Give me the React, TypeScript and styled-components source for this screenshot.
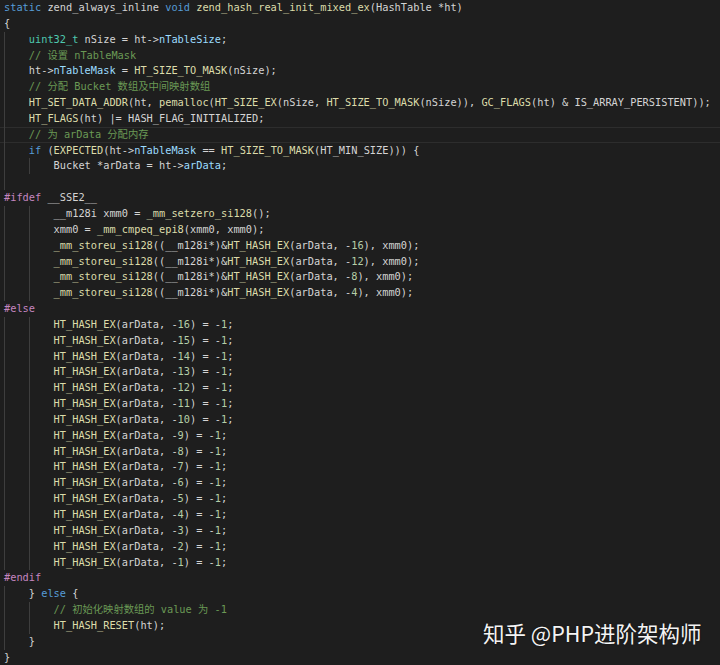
import React from "react";
import styled, { createGlobalStyle } from "styled-components";

const GlobalStyle = createGlobalStyle`
  html, body { margin: 0; padding: 0; background: #1e1e1e; }
`;

type Kind = "plain" | "kw" | "type" | "fn" | "member" | "num" | "comment" | "pp";
type Token = { kind: Kind; text: string };

const COLORS: Record<Kind, string> = {
  plain: "#d4d4d4",
  kw: "#569cd6",
  type: "#4ec9b0",
  fn: "#dcdcaa",
  member: "#9cdcfe",
  num: "#b5cea8",
  comment: "#6a9955",
  pp: "#c586c0",
};

const KEYWORDS = new Set(["static", "void", "if", "else"]);
const TYPES = new Set(["uint32_t"]);

const SOURCE = `static zend_always_inline void zend_hash_real_init_mixed_ex(HashTable *ht)
{
    uint32_t nSize = ht->nTableSize;
    // 设置 nTableMask
    ht->nTableMask = HT_SIZE_TO_MASK(nSize);
    // 分配 Bucket 数组及中间映射数组
    HT_SET_DATA_ADDR(ht, pemalloc(HT_SIZE_EX(nSize, HT_SIZE_TO_MASK(nSize)), GC_FLAGS(ht) & IS_ARRAY_PERSISTENT));
    HT_FLAGS(ht) |= HASH_FLAG_INITIALIZED;
    // 为 arData 分配内存
    if (EXPECTED(ht->nTableMask == HT_SIZE_TO_MASK(HT_MIN_SIZE))) {
        Bucket *arData = ht->arData;

#ifdef __SSE2__
        __m128i xmm0 = _mm_setzero_si128();
        xmm0 = _mm_cmpeq_epi8(xmm0, xmm0);
        _mm_storeu_si128((__m128i*)&HT_HASH_EX(arData, -16), xmm0);
        _mm_storeu_si128((__m128i*)&HT_HASH_EX(arData, -12), xmm0);
        _mm_storeu_si128((__m128i*)&HT_HASH_EX(arData, -8), xmm0);
        _mm_storeu_si128((__m128i*)&HT_HASH_EX(arData, -4), xmm0);
#else
        HT_HASH_EX(arData, -16) = -1;
        HT_HASH_EX(arData, -15) = -1;
        HT_HASH_EX(arData, -14) = -1;
        HT_HASH_EX(arData, -13) = -1;
        HT_HASH_EX(arData, -12) = -1;
        HT_HASH_EX(arData, -11) = -1;
        HT_HASH_EX(arData, -10) = -1;
        HT_HASH_EX(arData, -9) = -1;
        HT_HASH_EX(arData, -8) = -1;
        HT_HASH_EX(arData, -7) = -1;
        HT_HASH_EX(arData, -6) = -1;
        HT_HASH_EX(arData, -5) = -1;
        HT_HASH_EX(arData, -4) = -1;
        HT_HASH_EX(arData, -3) = -1;
        HT_HASH_EX(arData, -2) = -1;
        HT_HASH_EX(arData, -1) = -1;
#endif
    } else {
        // 初始化映射数组的 value 为 -1
        HT_HASH_RESET(ht);
    }
}`;

function tokenize(text: string): Token[] {
  const out: Token[] = [];
  const push = (kind: Kind, t: string) => {
    const last = out[out.length - 1];
    if (last && last.kind === kind && kind === "plain") last.text += t;
    else out.push({ kind, text: t });
  };
  if (text.startsWith("//")) return [{ kind: "comment", text }];
  let rest = text;
  if (text.startsWith("#")) {
    const m = /^#\w+/.exec(text);
    if (m) {
      out.push({ kind: "pp", text: m[0] });
      rest = text.slice(m[0].length);
    }
  }
  const re = /([A-Za-z_]\w*)|(\d+)|(->)|(\s+)|([^\w\s])/g;
  let m: RegExpExecArray | null;
  let prevArrow = false;
  while ((m = re.exec(rest))) {
    const tok = m[0];
    if (m[1]) {
      const after = rest.slice(re.lastIndex);
      let kind: Kind = "plain";
      if (KEYWORDS.has(tok)) kind = "kw";
      else if (TYPES.has(tok)) kind = "type";
      else if (prevArrow) kind = "member";
      else if (/^\s*\(/.test(after)) kind = "fn";
      push(kind, tok);
    } else if (m[2]) {
      push("num", tok);
    } else {
      push("plain", tok);
    }
    prevArrow = tok === "->";
  }
  return out;
}

const LINES = SOURCE.split("\n").map((raw, i) => {
  const spaces = raw.length - raw.trimStart().length;
  const body = raw.trimStart();
  const levels = body === "" ? 1 : Math.floor(spaces / 4);
  return { id: i, levels, tokens: tokenize(body) };
});

const CURRENT_LINE = 8;

const Page = styled.div`
  position: relative;
  width: 720px;
  height: 665px;
  overflow: hidden;
  background: #1e1e1e;
`;

const Editor = styled.div`
  display: flex;
  flex-direction: column;
  font-family: "DejaVu Sans Mono", "Noto Sans CJK SC", monospace;
  font-size: 10.3px;
  color: #d4d4d4;
`;

const Line = styled.div<{ $current?: boolean }>`
  display: flex;
  align-items: stretch;
  height: 15.85px;
  line-height: 15.85px;
  padding-left: 4px;
  white-space: pre;
  box-shadow: ${(p) =>
    p.$current ? "inset 0 1px 0 #2d2d2d, inset 0 -1px 0 #2d2d2d" : "none"};
`;

const Guide = styled.span`
  flex: none;
  width: 4ch;
  box-sizing: border-box;
  border-left: 1px solid #3e3e3e;
`;

const Code = styled.span`
  flex: none;
`;

const Tok = styled.span<{ $kind: Kind }>`
  color: ${(p) => COLORS[p.$kind]};
`;

const Watermark = styled.div`
  position: absolute;
  left: 483px;
  top: 622px;
  font-family: "Noto Sans CJK SC", "Noto Sans", sans-serif;
  font-size: 21.5px;
  line-height: 1;
  color: #f4f4f4;
  white-space: nowrap;
  text-shadow: 0 0 2px rgba(0, 0, 0, 0.6);
`;

export default function App() {
  return (
    <Page>
      <GlobalStyle />
      <Editor>
        {LINES.map((line) => (
          <Line key={line.id} $current={line.id === CURRENT_LINE}>
            {Array.from({ length: line.levels }).map((_, g) => (
              <Guide key={g} />
            ))}
            <Code>
              {line.tokens.map((t, k) => (
                <Tok key={k} $kind={t.kind}>
                  {t.text}
                </Tok>
              ))}
            </Code>
          </Line>
        ))}
      </Editor>
      <Watermark>知乎 @PHP进阶架构师</Watermark>
    </Page>
  );
}
